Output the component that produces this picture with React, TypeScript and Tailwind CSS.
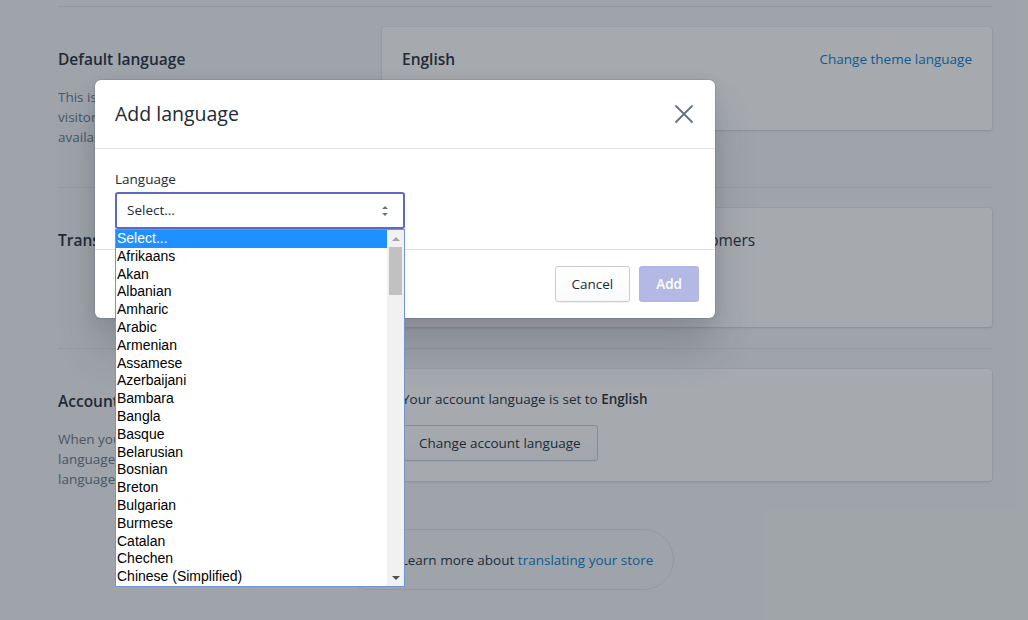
import React from "react";

const languages = [
    "Select...",
    "Afrikaans",
    "Akan",
    "Albanian",
    "Amharic",
    "Arabic",
    "Armenian",
    "Assamese",
    "Azerbaijani",
    "Bambara",
    "Bangla",
    "Basque",
    "Belarusian",
    "Bosnian",
    "Breton",
    "Bulgarian",
    "Burmese",
    "Catalan",
    "Chechen",
    "Chinese (Simplified)",
];

const Card = ({ children, className = "" }: { children: React.ReactNode; className?: string }) => (
    <div
        className={`w-[610px] bg-white rounded-[3px] p-5 shadow-[0_0_0_1px_rgba(63,63,68,0.05),0_1px_3px_0_rgba(63,63,68,0.15)] ${className}`}
    >
        {children}
    </div>
);

const Annotation = ({ title, lines }: { title: string; lines?: string[] }) => (
    <div className="w-[324px] pt-5 pr-5">
        <h2 className="text-[15.5px] leading-6 font-semibold text-[#212b36]">{title}</h2>
        {lines && (
            <div className="mt-4 text-[13.5px] leading-5 text-[#637381] whitespace-nowrap">
                {lines.map(l => (
                    <p key={l}>{l}</p>
                ))}
            </div>
        )}
    </div>
);

const SelectArrows = () => (
    <svg viewBox="0 0 20 20" className="w-5 h-5 fill-[#637381]">
        <path d="M13 8l-3-3-3 3h6zm-.1 4L10 14.9 7.1 12h5.8z" />
    </svg>
);

export default function App() {
    return (
        <div className="relative w-[1028px] h-[620px] overflow-hidden bg-[#f4f6f8] font-['Open_Sans',sans-serif] text-[#212b36]">
            <div className="ml-[58px] w-[934px] pt-[6px]">
                {/* default language */}
                <div className="flex items-start border-t border-[#dfe3e8] pt-5 pb-10">
                    <Annotation
                        title="Default language"
                        lines={[
                            "This is the language your store uses",
                            "visitors see first. Other languages are",
                            "available once you add them.",
                        ]}
                    />
                    <Card className="h-[103px]">
                        <div className="flex items-center justify-between">
                            <h3 className="text-[15.5px] leading-6 font-semibold">English</h3>
                            <a className="text-[13.5px] leading-5 text-[#007ace]">Change theme language</a>
                        </div>
                        <p className="mt-2 text-[13.5px] leading-5 text-[#637381]">Your theme is published in English</p>
                    </Card>
                </div>

                {/* translated languages */}
                <div className="flex items-start border-t border-[#dfe3e8] pt-5 pb-[21px]">
                    <Annotation title="Translated languages" />
                    <Card className="h-[119px]">
                        <h3 className="text-[15.5px] leading-6 whitespace-nowrap">
                            You haven't added languages for your customers
                        </h3>
                        <p className="mt-2 text-[13.5px] leading-5 text-[#637381]">Add a language to translate your store.</p>
                    </Card>
                </div>

                {/* account language */}
                <div className="flex items-start border-t border-[#dfe3e8] pt-5">
                    <Annotation
                        title="Account language"
                        lines={[
                            "When you set your account language, the",
                            "language of your admin changes. Your store",
                            "language stays the same.",
                        ]}
                    />
                    <Card className="h-[112px]">
                        <p className="text-[13.5px] leading-5">
                            Your account language is set to <span className="font-semibold">English</span>
                        </p>
                        <button className="mt-4 h-9 px-4 rounded-[3px] border border-[#c4cdd5] bg-gradient-to-b from-white to-[#f9fafb] text-[13.5px] text-[#212b36] shadow-[0_1px_0_0_rgba(22,29,37,0.05)]">
                            Change account language
                        </button>
                    </Card>
                </div>
            </div>

            {/* footer help */}
            <div className="flex justify-center mt-10 pr-[14px]">
                <div className="flex items-center h-[61px] rounded-full border border-[#dfe3e8] pl-4 pr-5">
                    <svg viewBox="0 0 24 24" className="w-6 h-6 mr-5">
                        <circle cx="12" cy="12" r="11" className="fill-[#eef9f9] stroke-[#47c1bf]" strokeWidth="1.5" />
                        <text x="12" y="16.5" textAnchor="middle" className="fill-[#47c1bf] text-[13px] font-semibold">?</text>
                    </svg>
                    <p className="text-[13.5px] leading-5">
                        Learn more about <a className="text-[#007ace]">translating your store</a>
                    </p>
                </div>
            </div>

            {/* backdrop */}
            <div className="absolute inset-0 bg-[#212b36]/40" />

            {/* modal */}
            <div className="absolute left-[95px] top-[80px] w-[620px] bg-white rounded-[6px] shadow-[0_0_0_1px_rgba(6,44,82,0.1),0_2px_16px_rgba(33,43,54,0.08),0_31px_41px_0_rgba(33,43,54,0.2)]">
                <div className="flex items-center justify-between h-[69px] px-5 border-b border-[#dfe3e8]">
                    <h2 className="text-[19.5px] leading-7 text-[#212b36]">Add language</h2>
                    <svg viewBox="0 0 20 20" className="w-5 h-5 mr-[1px]">
                        <path d="M2 2l16 16M18 2L2 18" className="stroke-[#637381]" strokeWidth="1.8" strokeLinecap="round" />
                    </svg>
                </div>
                <div className="px-5 pt-5 pb-5 border-b border-[#dfe3e8]">
                    <label className="block text-[13.5px] leading-5 mb-[3px]">Language</label>
                    <div className="flex items-center justify-between w-[290px] h-[37px] pl-[10px] pr-2 rounded-[3px] border-2 border-[#5c6ac4] bg-white">
                        <span className="text-[13.5px]">Select...</span>
                        <SelectArrows />
                    </div>
                </div>
                <div className="flex justify-end gap-[9px] py-4 pr-4">
                    <button className="h-9 px-4 rounded-[3px] border border-[#c4cdd5] bg-gradient-to-b from-white to-[#f9fafb] text-[13.5px] text-[#212b36] shadow-[0_1px_0_0_rgba(22,29,37,0.05)]">
                        Cancel
                    </button>
                    <button className="h-9 px-[17px] rounded-[3px] bg-[#b3b9e4] text-[13.5px] font-semibold text-white">
                        Add
                    </button>
                </div>
            </div>

            {/* native select popup */}
            <div className="absolute left-[115px] top-[229px] w-[290px] h-[358px] flex border border-[#7094d4] bg-white font-['Liberation_Sans',Arial,sans-serif] text-[14px] text-black">
                <ul className="flex-1 overflow-hidden">
                    {languages.map((lang, i) => (
                        <li
                            key={lang}
                            className={`h-[17.8px] leading-[17.8px] pl-[1px] whitespace-nowrap ${i === 0 ? "bg-[#1e90ff] text-white" : ""}`}
                        >
                            {lang}
                        </li>
                    ))}
                </ul>
                <div className="w-[17px] flex flex-col bg-[#f1f1f1]">
                    <div className="h-[17px] flex items-center justify-center">
                        <svg viewBox="0 0 8 4" className="w-2 h-1 fill-[#a3a3a3]">
                            <polygon points="0,4 4,0 8,4" />
                        </svg>
                    </div>
                    <div className="mx-[2px] h-[48px] bg-[#c1c1c1]" />
                    <div className="flex-1" />
                    <div className="h-[17px] flex items-center justify-center">
                        <svg viewBox="0 0 8 4" className="w-2 h-1 fill-[#505050]">
                            <polygon points="0,0 8,0 4,4" />
                        </svg>
                    </div>
                </div>
            </div>
        </div>
    );
}
